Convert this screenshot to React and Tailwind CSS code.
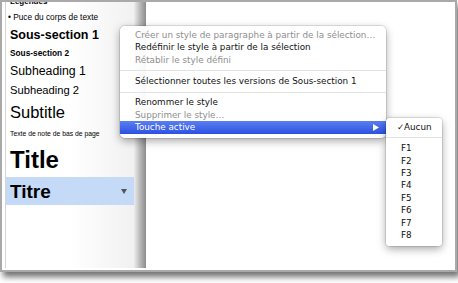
const styleRows = [
  { label: "Légendes", h: "h-[16px] -mt-[8px]", cls: "text-[8px] font-bold" },
  { label: "• Puce du corps de texte", h: "h-[15px] -ml-[2px]", cls: "text-[8.3px]" },
  { label: "Sous-section 1", h: "h-[21px]", cls: "text-[12.5px] font-bold" },
  { label: "Sous-section 2", h: "h-[15px]", cls: "text-[8.3px] font-bold" },
  { label: "Subheading 1", h: "h-[21px]", cls: "text-[12.3px]" },
  { label: "Subheading 2", h: "h-[18px]", cls: "text-[11.2px]" },
  { label: "Subtitle", h: "h-[25px]", cls: "text-[16.5px]" },
  { label: "Texte de note de bas de page", h: "h-[18px]", cls: "text-[6.8px]" },
  { label: "Title", h: "h-[34px]", cls: "text-[24px] font-bold" },
];

const menuItems = [
  { label: "Créer un style de paragraphe à partir de la sélection…", disabled: true },
  { label: "Redéfinir le style à partir de la sélection" },
  { label: "Rétablir le style défini", disabled: true },
  { sep: true },
  { label: "Sélectionner toutes les versions de Sous-section 1" },
  { sep: true },
  { label: "Renommer le style" },
  { label: "Supprimer le style…", disabled: true },
  { label: "Touche active", active: true },
];

const keys = ["F1", "F2", "F3", "F4", "F5", "F6", "F7", "F8"];

function Sidebar() {
  return (
    <div className="flex w-[129px] shrink-0 flex-col overflow-hidden border-l border-[#d4d4d4] bg-gradient-to-r from-white via-white to-[#f1f1f1] font-['Liberation_Sans',Arial,sans-serif] text-black">
      {styleRows.map((row) => (
        <div key={row.label} className={`flex shrink-0 items-center pl-[4px] leading-none ${row.h}`}>
          <span className={`whitespace-nowrap ${row.cls}`}>{row.label}</span>
        </div>
      ))}
      <div className="flex h-[28px] shrink-0 items-center justify-between bg-[#c4daf6] pl-[4px] pr-[7px] leading-none">
        <span className="text-[19px] font-bold">Titre</span>
        <svg width="6" height="5" viewBox="0 0 6 5">
          <path d="M0 0h6L3 5z" fill="#555" />
        </svg>
      </div>
    </div>
  );
}

function ContextMenu() {
  return (
    <div className="absolute left-[120px] top-[26px] w-[266px] rounded-[5px] bg-white/95 pt-[3px] pb-[4px] font-['DejaVu_Sans',Verdana,sans-serif] text-[8.8px] shadow-[0_3px_9px_rgba(0,0,0,0.35)] ring-1 ring-black/10">
      {menuItems.map((item, i) =>
        item.sep ? (
          <div key={i} className="flex h-[9px] items-center">
            <div className="h-px w-full bg-[#e2e2e2]" />
          </div>
        ) : (
          <div
            key={i}
            className={`flex h-[12.4px] items-center justify-between pl-[15px] pr-[7px] leading-none ${
              item.active
                ? "bg-gradient-to-b from-[#5a7ef0] to-[#2d50e2] text-white"
                : item.disabled
                ? "text-[#8e8e8e]"
                : "text-[#111]"
            }`}
          >
            <span className="whitespace-nowrap">{item.label}</span>
            {item.active && (
              <svg width="6" height="7" viewBox="0 0 6 7">
                <path d="M0 0L6 3.5L0 7z" fill="white" />
              </svg>
            )}
          </div>
        )
      )}
    </div>
  );
}

function KeyMenu() {
  return (
    <div className="absolute left-[386px] top-[118px] w-[56px] rounded-[4px] bg-white/95 pt-[3px] pb-[4px] font-['DejaVu_Sans',Verdana,sans-serif] text-[8.8px] text-[#111] shadow-[0_3px_9px_rgba(0,0,0,0.35)] ring-1 ring-black/10">
      <div className="relative flex h-[12.4px] items-center pl-[18px] leading-none">
        <span className="absolute left-[11px]">✓</span>
        <span>Aucun</span>
      </div>
      <div className="flex h-[9px] items-center">
        <div className="h-px w-full bg-[#e2e2e2]" />
      </div>
      {keys.map((k) => (
        <div key={k} className="flex h-[12.4px] items-center pl-[15px] leading-none">
          {k}
        </div>
      ))}
    </div>
  );
}

export default function App() {
  return (
    <div className="relative h-[283px] w-[458px] overflow-hidden bg-white">
      <div className="flex h-[272px] w-[457px] border-2 border-[#a9a9a9] bg-white pb-[2px] pl-[3px] shadow-[3px_5px_6px_rgba(0,0,0,0.55)]">
        <Sidebar />
        <div className="w-[12px] shrink-0 bg-gradient-to-r from-[#ededed] via-[#b9b9b9] to-[#8c8c8c]" />
        <div className="flex-1 bg-white" />
      </div>
      <ContextMenu />
      <KeyMenu />
    </div>
  );
}
